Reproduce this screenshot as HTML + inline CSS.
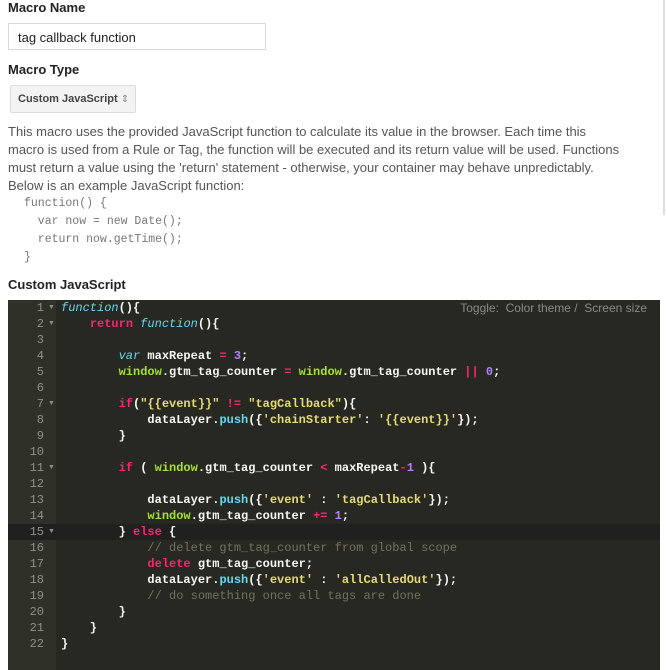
<!DOCTYPE html>
<html><head><meta charset="utf-8"><style>
body{margin:0;width:666px;height:670px;overflow:hidden;background:#fff;font-family:"Liberation Sans",Arial,sans-serif;position:relative}
.h{position:absolute;left:8px;font-weight:bold;font-size:13px;color:#222}
.inp{position:absolute;left:8px;top:23px;height:27px;border:1px solid #d9d9d9;box-sizing:border-box;width:258px;font-size:13px;color:#222;padding-left:9px;line-height:27px}
.sel{position:absolute;left:10px;top:85px;width:126px;height:28px;box-sizing:border-box;border:1px solid #dcdcdc;border-radius:2px;background:#f3f3f3;font-size:11px;font-weight:bold;color:#444;padding-left:7px;line-height:27px}
.sel span{font-weight:normal;color:#888;font-size:10px}
.desc{position:absolute;left:8px;top:123px;width:660px;font-size:13px;line-height:18px;color:#555;white-space:nowrap}
.ex{position:absolute;left:24px;top:195px;font-family:"Liberation Mono",monospace;font-size:11.5px;line-height:18px;color:#777;white-space:pre;margin:0}
.sb{position:absolute;left:663px;top:0;width:2px;height:215px;background:#ddd}
.ed{position:absolute;left:8px;top:300px;width:652px;height:370px;background:#272822}
.gut{position:absolute;left:0;top:0;width:48px;height:370px;background:#2f3129}
.cur{position:absolute;left:0;top:224px;width:652px;height:16px;background:#202020}
.num{position:absolute;left:0;top:0;width:36px;text-align:right;font-family:"Liberation Mono",monospace;font-size:12px;line-height:16px;color:#8f908a;white-space:pre;margin:0}
.ar{position:absolute;left:40px;font-size:7px;color:#8f908a}
pre.c{position:absolute;left:53px;top:0;margin:0;font-family:"Liberation Mono",monospace;font-size:12px;line-height:16px;color:#f8f8f2;white-space:pre;font-weight:bold}
.k{color:#f92672}.f{color:#66d9ef;font-style:italic;font-weight:normal}.g{color:#a6e22e}.n{color:#ae81ff}.s{color:#e6db74}.cm{color:#75715e;font-weight:normal}.p{color:#66d9ef}
.tg{position:absolute;right:13px;top:1px;font-size:12px;color:#8a8a8a}
</style></head><body>
<div class="h" style="top:0">Macro Name</div>
<div class="inp">tag callback function</div>
<div class="h" style="top:62px">Macro Type</div>
<div class="sel">Custom JavaScript <span>&#8661;</span></div>
<div class="desc">This macro uses the provided JavaScript function to calculate its value in the browser. Each time this<br>macro is used from a Rule or Tag, the function will be executed and its return value will be used. Functions<br>must return a value using the 'return' statement - otherwise, your container may behave unpredictably.<br>Below is an example JavaScript function:</div>
<pre class="ex">function() {
  var now = new Date();
  return now.getTime();
}</pre>
<div class="sb"></div>
<div class="h" style="top:277px">Custom JavaScript</div>
<div class="ed">
<div class="gut"></div>
<div class="cur"></div>
<pre class="num">1
2
3
4
5
6
7
8
9
10
11
12
13
14
15
16
17
18
19
20
21
22</pre>
<span class="ar" style="top:4px">&#9660;</span><span class="ar" style="top:20px">&#9660;</span><span class="ar" style="top:100px">&#9660;</span><span class="ar" style="top:164px">&#9660;</span><span class="ar" style="top:228px">&#9660;</span>
<pre class="c"><span class="f">function</span>(){
    <span class="k">return</span> <span class="f">function</span>(){

        <span class="f">var</span> maxRepeat <span class="k">=</span> <span class="n">3</span>;
        <span class="g">window</span>.gtm_tag_counter <span class="k">=</span> <span class="g">window</span>.gtm_tag_counter <span class="k">||</span> <span class="n">0</span>;

        <span class="k">if</span>(<span class="s">"{{event}}"</span> <span class="k">!=</span> <span class="s">"tagCallback"</span>){
            dataLayer.<span class="p">push</span>({<span class="s">'chainStarter'</span>: <span class="s">'{{event}}'</span>});
        }

        <span class="k">if</span> ( <span class="g">window</span>.gtm_tag_counter <span class="k">&lt;</span> maxRepeat<span class="k">-</span><span class="n">1</span> ){

            dataLayer.<span class="p">push</span>({<span class="s">'event'</span> : <span class="s">'tagCallback'</span>});
            <span class="g">window</span>.gtm_tag_counter <span class="k">+=</span> <span class="n">1</span>;
        } <span class="k">else</span> {
            <span class="cm">// delete gtm_tag_counter from global scope</span>
            <span class="k">delete</span> gtm_tag_counter;
            dataLayer.<span class="p">push</span>({<span class="s">'event'</span> : <span class="s">'allCalledOut'</span>});
            <span class="cm">// do something once all tags are done</span>
        }
    }
}</pre>
<div class="tg">Toggle:&nbsp; Color theme /&nbsp; Screen size</div>
</div>
</body></html>
